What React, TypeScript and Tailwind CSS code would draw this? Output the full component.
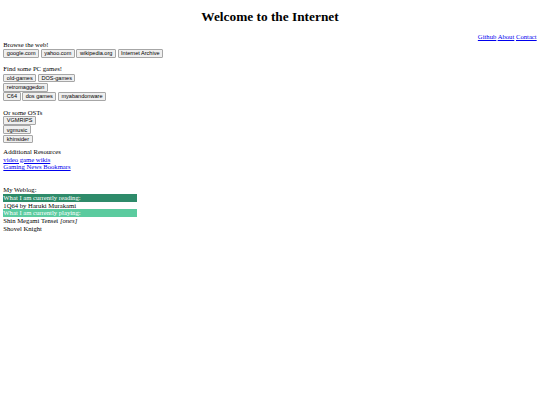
import React from "react";

const Btn = ({ children }: { children: React.ReactNode }) => (
  <button className="h-[8.75px] px-[2.5px] border-[0.83px] border-[#a6a6a6] bg-[#efefef] rounded-[1px] text-[5.55px] leading-[6.4px] text-black font-['Liberation_Sans',Arial,sans-serif] whitespace-nowrap">
    {children}
  </button>
);

const Row = ({ children }: { children: React.ReactNode }) => (
  <div className="flex items-end gap-[1.67px] h-[9.3px]">{children}</div>
);

const Line = ({ children }: { children?: React.ReactNode }) => (
  <div className="h-[7.67px]">{children}</div>
);

const A = ({ children }: { children: React.ReactNode }) => (
  <a href="#" className="text-[#0000ee] underline">
    {children}
  </a>
);

export default function App() {
  return (
    <div className="min-h-[405px] bg-white text-black px-[3.33px] font-['Liberation_Serif','Times_New_Roman',serif] text-[6.67px] leading-[7.67px]">
      <h1 className="pt-[8.9px] pb-[8.9px] text-center text-[13.33px] leading-[15.3px] font-bold">
        Welcome to the Internet
      </h1>
      <div className="text-right">
        <A>Github</A> <A>About</A> <A>Contact</A>
      </div>
      <Line>Browse the web!</Line>
      <Row>
        <Btn>google.com</Btn>
        <Btn>yahoo.com</Btn>
        <Btn>wikipedia.org</Btn>
        <Btn>Internet Archive</Btn>
      </Row>
      <Line />
      <Line>Find some PC games!</Line>
      <Row>
        <Btn>old-games</Btn>
        <Btn>DOS-games</Btn>
      </Row>
      <Row>
        <Btn>retromaggedon</Btn>
      </Row>
      <Row>
        <Btn>C64</Btn>
        <Btn>dos games</Btn>
        <Btn>myabandonware</Btn>
      </Row>
      <Line />
      <div className="h-[7px]">Or some OSTs</div>
      <Row>
        <Btn>VGMRIPS</Btn>
      </Row>
      <Row>
        <Btn>vgmusic</Btn>
      </Row>
      <Row>
        <Btn>khinsider</Btn>
      </Row>
      <div className="h-[4.5px]" />
      <Line>Additional Resources</Line>
      <Line>
        <A>video game wikis</A>
      </Line>
      <Line>
        <A>Gaming News Bookmars</A>
      </Line>
      <Line />
      <Line />
      <Line>My Weblog:</Line>
      <div className="w-[134px] bg-[#2e8b6a] text-white h-[7.67px]">What I am currently reading:</div>
      <Line>1Q64 by Haruki Murakami</Line>
      <div className="w-[134px] bg-[#5bcb9f] text-white h-[7.67px]">What I am currently playing:</div>
      <Line>
        Shin Megami Tensei <i>[ones]</i>
      </Line>
      <Line>Shovel Knight</Line>
    </div>
  );
}
